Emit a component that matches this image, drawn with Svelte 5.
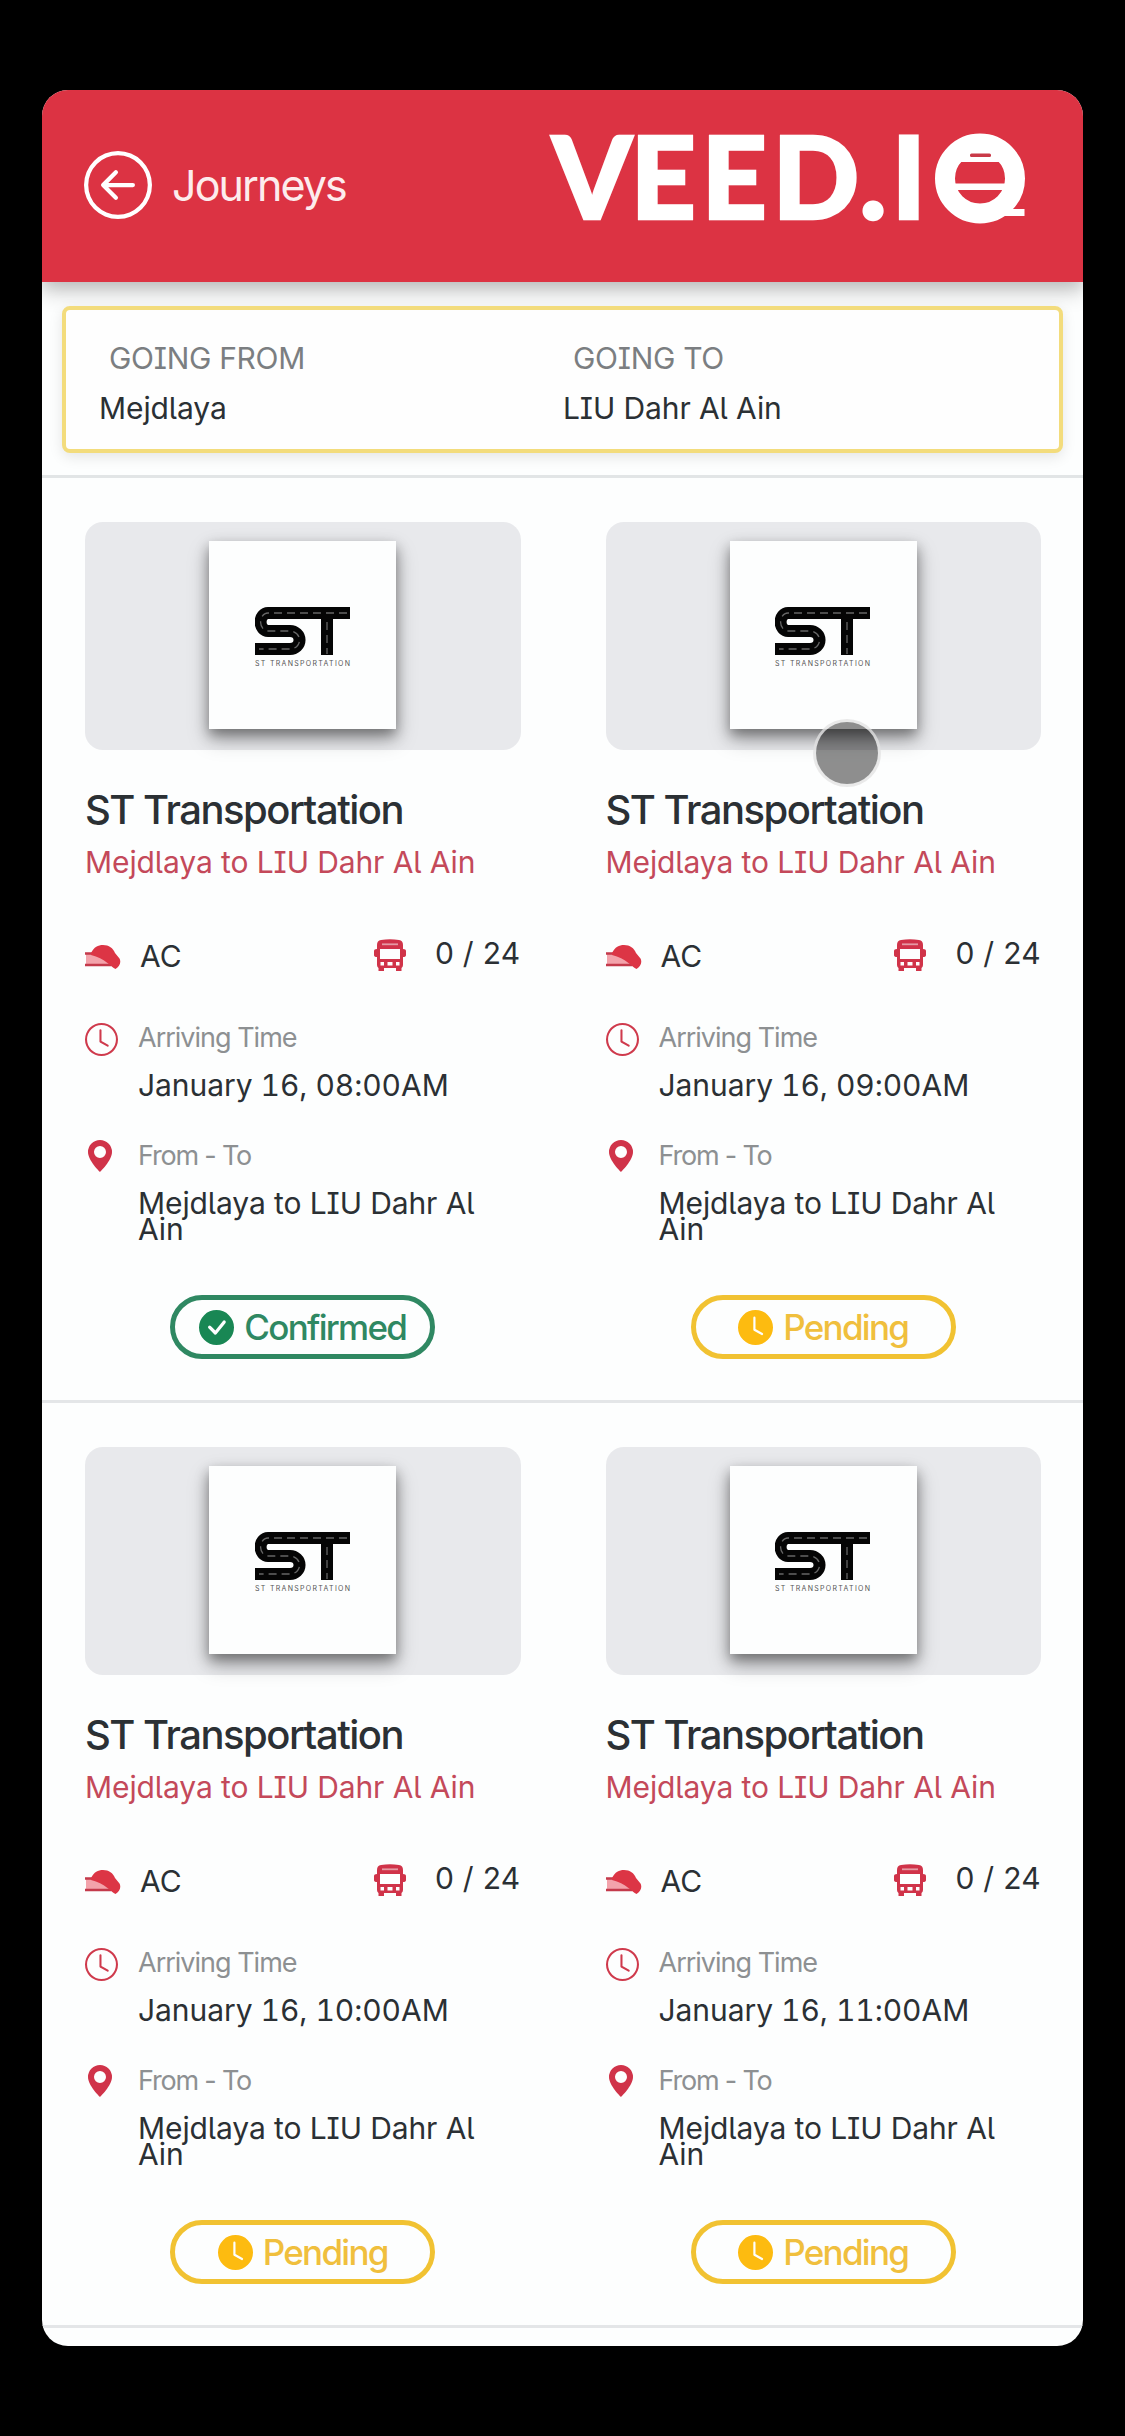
<script>
  const route = 'Mejdlaya to LIU Dahr Al Ain';
  const journeys = [
    { time: 'January 16, 08:00AM', status: 'Confirmed' },
    { time: 'January 16, 09:00AM', status: 'Pending', touch: true },
    { time: 'January 16, 10:00AM', status: 'Pending' },
    { time: 'January 16, 11:00AM', status: 'Pending' },
  ];
</script>

<div class="screen">
  <header>
    <svg class="back" viewBox="0 0 16 16" fill="currentColor">
      <path d="M1 8a7 7 0 1 0 14 0A7 7 0 0 0 1 8m15 0A8 8 0 1 1 0 8a8 8 0 0 1 16 0m-4.5-.5a.5.5 0 0 1 0 1H5.707l2.147 2.146a.5.5 0 0 1-.708.708l-3-3a.5.5 0 0 1 0-.708l3-3a.5.5 0 1 1 .708.708L5.707 7.5z" fill-rule="evenodd" />
    </svg>
    <h1>Journeys</h1>
    <svg class="brand" viewBox="0 -30 484 160">
      <text class="wordmark" x="6 84.5 155.5 226.5 313.5 345.5" y="88.3">VEED.I</text>
      <ellipse cx="434" cy="47.5" rx="35" ry="35" fill="none" stroke="#fff" stroke-width="20" />
      <rect x="408" y="18" width="52" height="13" fill="#fff" />
      <rect x="424" y="22.5" width="21" height="3.4" rx="1.5" fill="#c93a48" />
      <rect x="408" y="52.5" width="52" height="6.5" fill="#fff" />
      <path d="M448 78h30.5v7H448z" fill="#fff" />
    </svg>
  </header>

  <section class="search">
    <div class="field">
      <span class="caption">GOING FROM</span>
      <span class="place">Mejdlaya</span>
    </div>
    <div class="field">
      <span class="caption">GOING TO</span>
      <span class="place">LIU Dahr Al Ain</span>
    </div>
  </section>

  <main>
    {#each journeys as j}
      <article>
        <div class="cover">
          <div class="tile">
            <svg class="logo" viewBox="0 0 96 60">
              <g fill="none" stroke="#050505" stroke-width="12">
                <path d="M95 6H13a7 8.5 0 0 0 0 18h22a9 8.5 0 0 1 0 18H0" />
                <path d="M72 6v42" />
              </g>
              <g fill="none" stroke="#666" stroke-width="1.3" stroke-dasharray="8 5">
                <path d="M92 6H13a7 8.5 0 0 0 0 18h22a9 8.5 0 0 1 0 18H4" />
                <path d="M72 15v32" />
              </g>
              <text x="0" y="59" textLength="95" lengthAdjust="spacing">ST TRANSPORTATION</text>
            </svg>
          </div>
          {#if j.touch}<span class="touch"></span>{/if}
        </div>
        <h2>ST Transportation</h2>
        <p class="sub">{route}</p>

        <div class="meta">
          <svg class="ac" viewBox="0 0 36 26">
            <path d="M1 10h20l8 10H1z" fill="#f3a3ab" />
            <path d="M0 9.5h16M0 21h26" fill="none" stroke="#c43a4b" stroke-width="2.6" />
            <path d="M6 9C9 3 13 1 18 1c6 0 10 3 12 8l4.5 5.5c2 4 0 8-4 10.5C26 23 20 14 6 11z" fill="#dc3545" />
          </svg>
          <span class="ac-text">AC</span>
          <svg class="bus" viewBox="0 0 32 32">
            <path fill-rule="evenodd" fill="#d03349" d="M7 1Q16-.5 25 1q4 .6 4 5v4q3 0 3 2v4q0 2-3 2v8q0 2-1.5 3v3h-5.500v-3H10v3H4.500v-3Q3 28 3 26v-8q-3 0-3-2v-4q0-2 3-2V6q0-4.400 4-5zM6 10v10h20V10zM6.500 23v3.500h3.500V23zm7 0v3.500h5V23zm8.500 0v3.500h3.500V23z" />
            <path d="M8 5.3h16" stroke="#e59aa4" stroke-width="1.8" />
          </svg>
          <span class="seats">0 / 24</span>
        </div>

        <div class="detail">
          <svg class="clock" viewBox="0 0 16 16" fill="#cf3a4c">
            <path d="M8 3.500a.5.5 0 0 0-1 0V9a.5.5 0 0 0 .252.434l3.500 2a.5.5 0 0 0 .496-.868L8 8.710z" />
            <path d="M8 16A8 8 0 1 0 8 0a8 8 0 0 0 0 16m7-8A7 7 0 1 1 1 8a7 7 0 0 1 14 0" />
          </svg>
          <div>
            <div class="label">Arriving Time</div>
            <div class="time">{j.time}</div>
          </div>
        </div>

        <div class="detail place-row">
          <svg class="pin" viewBox="0 0 12 16" fill="#d03349">
            <path d="M6 16s6-5.686 6-10A6 6 0 0 0 0 6c0 4.314 6 10 6 10m0-7a3 3 0 1 1 0-6 3 3 0 0 1 0 6" />
          </svg>
          <div>
            <div class="label from">From - To</div>
            <div class="route">{route}</div>
          </div>
        </div>

        <div class="badge" class:ok={j.status === 'Confirmed'}>
          <svg viewBox="0 0 16 16" fill="currentColor">
            {#if j.status === 'Confirmed'}
              <path d="M16 8A8 8 0 1 1 0 8a8 8 0 0 1 16 0m-3.970-3.030a.75.75 0 0 0-1.080.022L7.477 9.417 5.384 7.323a.75.75 0 0 0-1.060 1.060L6.970 11.030a.75.75 0 0 0 1.079-.02l3.992-4.990a.75.75 0 0 0-.01-1.050z" />
            {:else}
              <path d="M16 8A8 8 0 1 1 0 8a8 8 0 0 1 16 0M8 3.500a.5.5 0 0 0-1 0V9a.5.5 0 0 0 .252.434l3.500 2a.5.5 0 0 0 .496-.868L8 8.710z" />
            {/if}
          </svg>
          <span>{j.status}</span>
        </div>
      </article>
    {/each}
  </main>
</div>

<style>
  :global(body) {
    background: #000;
  }
  .screen {
    box-sizing: border-box;
    width: 1041px;
    height: 2256px;
    margin: 90px 42px;
    overflow: hidden;
    border-radius: 26px;
    background: #fdfefe;
    color: #2b3034;
    font: 400 30px Inter, 'Noto Sans', sans-serif;
    font-feature-settings: 'cv05', 'cv08';
  }
  h1, h2, p {
    margin: 0;
  }
  svg {
    display: block;
    flex: none;
  }
  header {
    display: flex;
    align-items: center;
    box-sizing: border-box;
    height: 192px;
    padding: 0 53px 2px 42px;
    background: #dc3343;
    color: #fff;
    box-shadow: 0 10px 20px rgba(0, 0, 0, 0.2), 0 6px 12px rgba(0, 0, 0, 0.08);
  }
  .back {
    width: 68px;
    height: 68px;
  }
  h1 {
    margin-left: 20px;
    color: #fdeced;
    font-size: 43px;
    font-weight: 400;
    line-height: 60px;
    letter-spacing: -1.9px;
  }
  .brand {
    width: 484px;
    height: 160px;
    margin: 0 0 8px auto;
  }
  .wordmark {
    font: 900 114px Lato, sans-serif;
    fill: #fff;
    stroke: #fff;
    stroke-width: 2.5px;
  }
  .search {
    position: relative;
    display: grid;
    grid-template-columns: 464px 1fr;
    box-sizing: border-box;
    height: 147px;
    margin: 24px 20px 0;
    padding: 28px 0 0 33px;
    border: 4px solid #f3dc7c;
    border-radius: 8px;
    background: #fefefe;
    box-shadow: 0 4px 14px rgba(0, 0, 0, 0.1);
  }
  .field {
    display: flex;
    flex-direction: column;
    gap: 10px;
    line-height: 40px;
  }
  .caption {
    padding-left: 10px;
    color: #7b7e81;
    letter-spacing: -0.3px;
  }
  .place {
    letter-spacing: -0.1px;
  }
  main {
    display: grid;
    grid-template-columns: 1fr 1fr;
    margin-top: 22px;
    border-top: 3px solid #e2e5e6;
  }
  article {
    box-sizing: border-box;
    height: 925px;
    padding: 44px 42px 0 43px;
    border-bottom: 3px solid #e4e6e8;
  }
  .cover {
    position: relative;
    display: flex;
    justify-content: center;
    box-sizing: border-box;
    height: 228px;
    padding-top: 19px;
    border-radius: 18px;
    background: #e8e9ec;
  }
  .tile {
    display: flex;
    align-items: flex-start;
    justify-content: center;
    box-sizing: border-box;
    width: 187px;
    height: 188px;
    padding-top: 66px;
    background: #fdfefe;
    box-shadow: 0 10px 20px rgba(0, 0, 0, 0.28), 0 6px 12px rgba(0, 0, 0, 0.36);
  }
  .logo {
    width: 96px;
    height: 60px;
  }
  .logo text {
    font: 400 7px Inter, sans-serif;
    fill: #555;
  }
  .touch {
    position: absolute;
    top: 200px;
    left: 210px;
    width: 62px;
    height: 62px;
    border-radius: 50%;
    background: rgba(0, 0, 0, 0.44);
    box-shadow: 0 0 0 3px rgba(225, 225, 225, 0.75);
  }
  h2 {
    margin-top: 38px;
    font-size: 40px;
    font-weight: 500;
    line-height: 44px;
    letter-spacing: -1.5px;
  }
  .sub {
    margin-top: 10px;
    color: #c4495a;
    line-height: 40px;
    letter-spacing: -0.1px;
  }
  .meta {
    display: flex;
    align-items: center;
    height: 48px;
    margin-top: 50px;
  }
  .ac {
    width: 36px;
    height: 26px;
    margin-top: 2px;
  }
  .ac-text {
    margin-left: 19px;
  }
  .bus {
    width: 32px;
    height: 32px;
    margin: -3px 0 0 auto;
  }
  .seats {
    margin: -6px 0 0 29px;
    letter-spacing: 0.3px;
  }
  .detail {
    display: flex;
    margin-top: 39px;
  }
  .detail > svg {
    margin-top: 4px;
  }
  .clock {
    width: 33px;
    height: 33px;
    margin-right: 20px;
  }
  .detail > .pin {
    width: 24px;
    height: 32px;
    margin: 3px 26px 0 3px;
  }
  .label {
    position: relative;
    top: 1px;
    color: #8d9092;
    font-size: 27px;
    line-height: 36px;
    letter-spacing: -1px;
  }
  .label.from {
    letter-spacing: -1.2px;
  }
  .time {
    margin-top: 10px;
    line-height: 40px;
    letter-spacing: -0.05px;
    font-variant-numeric: tabular-nums;
  }
  .place-row {
    margin-top: 32px;
  }
  .route {
    width: 360px;
    margin-top: 17px;
    line-height: 26px;
    letter-spacing: -0.1px;
  }
  .badge {
    display: flex;
    align-items: center;
    justify-content: center;
    gap: 10px;
    box-sizing: border-box;
    width: 265px;
    height: 64px;
    margin: 53px auto 0;
    border: 5px solid #f1c232;
    border-radius: 33px;
    color: #f0bf3d;
    font-size: 35px;
    font-weight: 500;
    letter-spacing: -1.7px;
  }
  .badge.ok {
    border-color: #2f8862;
    color: #2f8862;
  }
  .badge svg {
    width: 35px;
    height: 35px;
    color: #fdbb10;
  }
  .badge.ok svg {
    color: #198754;
  }
</style>
